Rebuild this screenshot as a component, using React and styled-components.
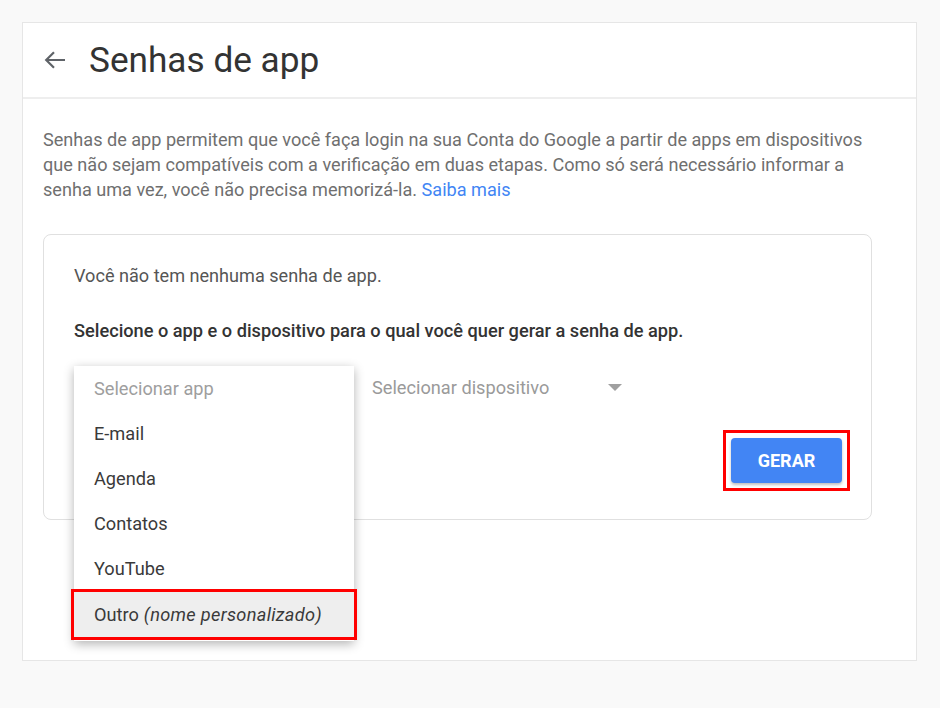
import React from "react";
import styled, { createGlobalStyle } from "styled-components";

const GlobalStyle = createGlobalStyle`
  body {
    margin: 0;
    background: #f9f9f9;
    font-family: Roboto, "Liberation Sans", Arial, sans-serif;
  }
`;

const Frame = styled.div`
  width: 940px;
  height: 708px;
  padding: 22px 0 0 22px;
  box-sizing: border-box;
`;

const Panel = styled.div`
  width: 895px;
  height: 639px;
  box-sizing: border-box;
  background: #fff;
  border: 1px solid #e6e6e6;
`;

const Header = styled.header`
  display: flex;
  align-items: center;
  gap: 23px;
  height: 74px;
  padding-left: 21px;
  border-bottom: 2px solid #eeeeee;
`;

const BackButton = styled.button`
  display: flex;
  padding: 0;
  border: 0;
  background: none;
  color: #5f6368;
  cursor: pointer;
`;

const Title = styled.h1`
  margin: 0;
  font-size: 35.2px;
  font-weight: 400;
  color: #333333;
`;

const Body = styled.div`
  padding: 28px 0 0 20px;
`;

const Intro = styled.p`
  width: 829px;
  margin: 0 0 32px;
  font-size: 18.1px;
  line-height: 25px;
  color: #6f6f6f;
`;

const Link = styled.a`
  color: #4285f4;
  text-decoration: none;
`;

const Card = styled.section`
  width: 829px;
  box-sizing: border-box;
  border: 1px solid #e0e0e0;
  border-radius: 8px;
  padding: 29px 29px 36px 30px;
`;

const Note = styled.p`
  margin: 0 0 31px;
  font-size: 18.1px;
  line-height: 24px;
  color: #555555;
`;

const Prompt = styled.p`
  margin: 0 0 22px;
  font-size: 18.2px;
  line-height: 24px;
  font-weight: 500;
  color: #333333;
`;

const SelectRow = styled.div`
  display: flex;
  gap: 18px;
  height: 45px;
`;

const Select = styled.div`
  position: relative;
  width: ${(p) => p.$width}px;
  display: flex;
  align-items: center;
  justify-content: space-between;
  font-size: 18.2px;
  color: #9a9a9a;
`;

const Caret = styled.span`
  width: 0;
  height: 0;
  border-left: 7px solid transparent;
  border-right: 7px solid transparent;
  border-top: 7px solid #a0a0a0;
  margin-right: 6px;
`;

const Menu = styled.ul`
  position: absolute;
  top: 1px;
  left: 0;
  z-index: 2;
  width: 280px;
  margin: 0;
  padding: 0 0 4px;
  list-style: none;
  background: #fff;
  box-shadow: 0 3px 10px rgba(0, 0, 0, 0.3);
`;

const MenuItem = styled.li`
  display: flex;
  align-items: center;
  gap: 5px;
  height: 45px;
  padding-left: 20px;
  font-size: 18.2px;
  color: ${(p) => (p.$placeholder ? "#9e9e9e" : "#3a3a3a")};
  background: ${(p) => (p.$active ? "#eeeeee" : "transparent")};
  outline: ${(p) => (p.$active ? "3px solid #ff0000" : "none")};
  margin-top: ${(p) => (p.$active ? "1px" : "0")};
`;

const Hint = styled.em`
  font-style: italic;
  letter-spacing: 0.3px;
`;

const Actions = styled.div`
  display: flex;
  justify-content: flex-end;
  margin: 20px -8px -8px 0;
`;

const Marked = styled.div`
  display: flex;
  padding: 5px;
  border: 3px solid #ff0000;
`;

const Generate = styled.button`
  width: 111px;
  height: 45px;
  border: 0;
  border-radius: 4px;
  background: #4285f4;
  color: #fff;
  font-family: inherit;
  font-size: 18px;
  font-weight: 700;
  box-shadow: 0 2px 3px rgba(0, 0, 0, 0.25);
  cursor: pointer;
`;

const ArrowBack = () => (
  <svg width="22" height="20" viewBox="0 0 22 20" fill="none">
    <path
      d="M21 10H2.5M10 2.2L2.2 10l7.8 7.8"
      stroke="currentColor"
      strokeWidth="2.2"
    />
  </svg>
);

const apps = ["E-mail", "Agenda", "Contatos", "YouTube"];

export default function App() {
  return (
    <>
      <GlobalStyle />
      <Frame>
        <Panel>
          <Header>
            <BackButton aria-label="Voltar">
              <ArrowBack />
            </BackButton>
            <Title>Senhas de app</Title>
          </Header>
          <Body>
            <Intro>
              Senhas de app permitem que você faça login na sua Conta do Google a
              partir de apps em dispositivos que não sejam compatíveis com a
              verificação em duas etapas. Como só será necessário informar a senha
              uma vez, você não precisa memorizá-la. <Link href="#">Saiba mais</Link>
            </Intro>
            <Card>
              <Note>Você não tem nenhuma senha de app.</Note>
              <Prompt>
                Selecione o app e o dispositivo para o qual você quer gerar a senha
                de app.
              </Prompt>
              <SelectRow>
                <Select $width={280}>
                  <Menu>
                    <MenuItem $placeholder>Selecionar app</MenuItem>
                    {apps.map((a) => (
                      <MenuItem key={a}>{a}</MenuItem>
                    ))}
                    <MenuItem $active>
                      Outro <Hint>(nome personalizado)</Hint>
                    </MenuItem>
                  </Menu>
                </Select>
                <Select $width={256}>
                  Selecionar dispositivo
                  <Caret />
                </Select>
              </SelectRow>
              <Actions>
                <Marked>
                  <Generate>GERAR</Generate>
                </Marked>
              </Actions>
            </Card>
          </Body>
        </Panel>
      </Frame>
    </>
  );
}
